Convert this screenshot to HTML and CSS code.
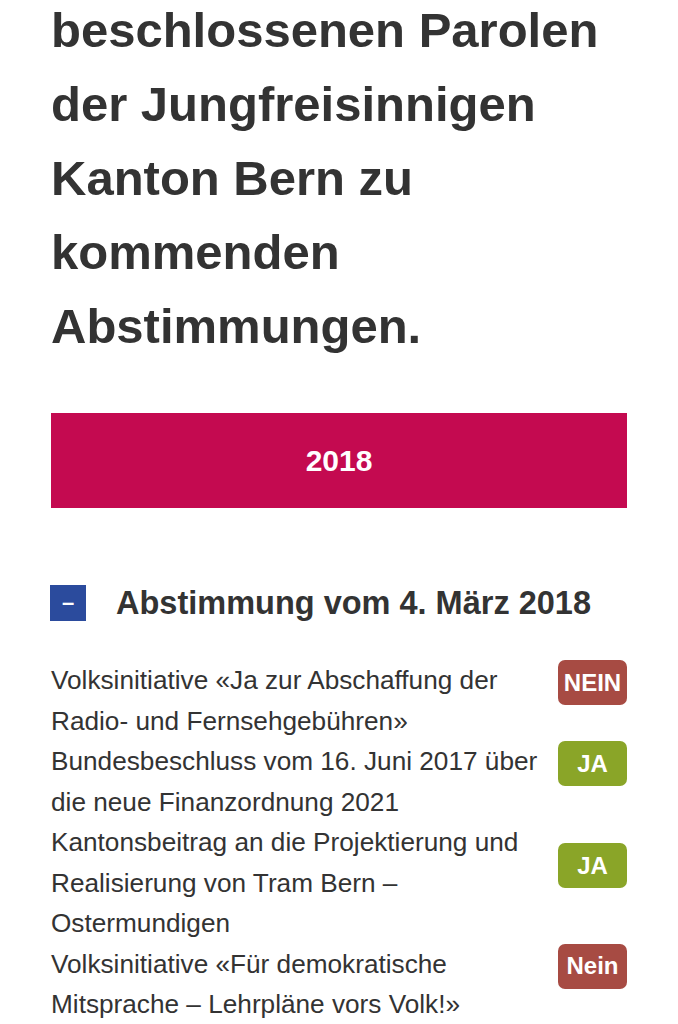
FILE: index.html
```html
<!DOCTYPE html>
<html lang="de">
<head>
    <meta charset="UTF-8">
    <meta name="viewport" content="width=device-width, initial-scale=1.0">
    <title>Parolen Jungfreisinnige Kanton Bern</title>
    <link rel="stylesheet" href="styles.css">
</head>
<body>
    <div class="page">
        <h1 class="intro">beschlossenen Parolen der Jungfreisinnigen Kanton Bern zu kommenden Abstimmungen.</h1>

        <div class="year-bar">2018</div>

        <div class="vote">
            <div class="vote-head">
                <span class="toggle">&ndash;</span>
                <h2 class="vote-title">Abstimmung vom 4. März 2018</h2>
            </div>

            <div class="vote-list">
                <div class="vote-row">
                    <p class="vote-text">Volksinitiative «Ja zur Abschaffung der Radio- und Fernsehgebühren»</p>
                    <span class="badge badge-nein">NEIN</span>
                </div>
                <div class="vote-row">
                    <p class="vote-text">Bundesbeschluss vom 16. Juni 2017 über die neue Finanzordnung 2021</p>
                    <span class="badge badge-ja">JA</span>
                </div>
                <div class="vote-row">
                    <p class="vote-text">Kantonsbeitrag an die Projektierung und Realisierung von Tram Bern – Ostermundigen</p>
                    <span class="badge badge-ja badge-low">JA</span>
                </div>
                <div class="vote-row">
                    <p class="vote-text">Volksinitiative «Für demokratische Mitsprache – Lehrpläne vors Volk!»</p>
                    <span class="badge badge-nein">Nein</span>
                </div>
            </div>
        </div>
    </div>
</body>
</html>
```

FILE: styles.css
```css
/* Grundlayout */
body {
    margin: 0;
    background-color: #ffffff;
    color: #333333;
    font-family: "Liberation Sans", Arial, Helvetica, sans-serif;
}

.page {
    padding: 0 51px;
}

/* Einleitung */
.intro {
    margin: -7px 0 0 0;
    font-size: 49px;
    line-height: 74px;
    font-weight: bold;
    color: #333333;
}

/* Jahresbalken */
.year-bar {
    margin-top: 50px;
    height: 95px;
    display: flex;
    align-items: center;
    justify-content: center;
    background-color: #c40a50;
    color: #ffffff;
    font-size: 30px;
    font-weight: bold;
}

/* Abstimmung */
.vote {
    margin-top: 77px;
}

.vote-head {
    display: flex;
    align-items: center;
    gap: 30px;
    margin-left: -1px;
}

.toggle {
    width: 36px;
    height: 36px;
    flex: none;
    display: flex;
    align-items: center;
    justify-content: center;
    background-color: #2b4b9d;
    color: #ffffff;
    font-size: 22px;
    font-weight: bold;
    line-height: 1;
}

.vote-title {
    margin: 0;
    font-size: 32.5px;
    line-height: 36px;
    font-weight: bold;
}

.vote-list {
    margin-top: 39px;
}

.vote-row {
    display: flex;
    align-items: flex-start;
    gap: 10px;
}

.vote-text {
    flex: 1;
    margin: 0;
    font-size: 26.2px;
    line-height: 40.5px;
}

.badge {
    width: 69px;
    height: 45px;
    flex: none;
    display: flex;
    align-items: center;
    justify-content: center;
    border-radius: 7px;
    color: #ffffff;
    font-size: 24px;
    font-weight: bold;
}

.badge-nein {
    background-color: #a74b43;
}

.badge-ja {
    background-color: #8aa528;
}

.badge-low {
    margin-top: 21px;
}
```
